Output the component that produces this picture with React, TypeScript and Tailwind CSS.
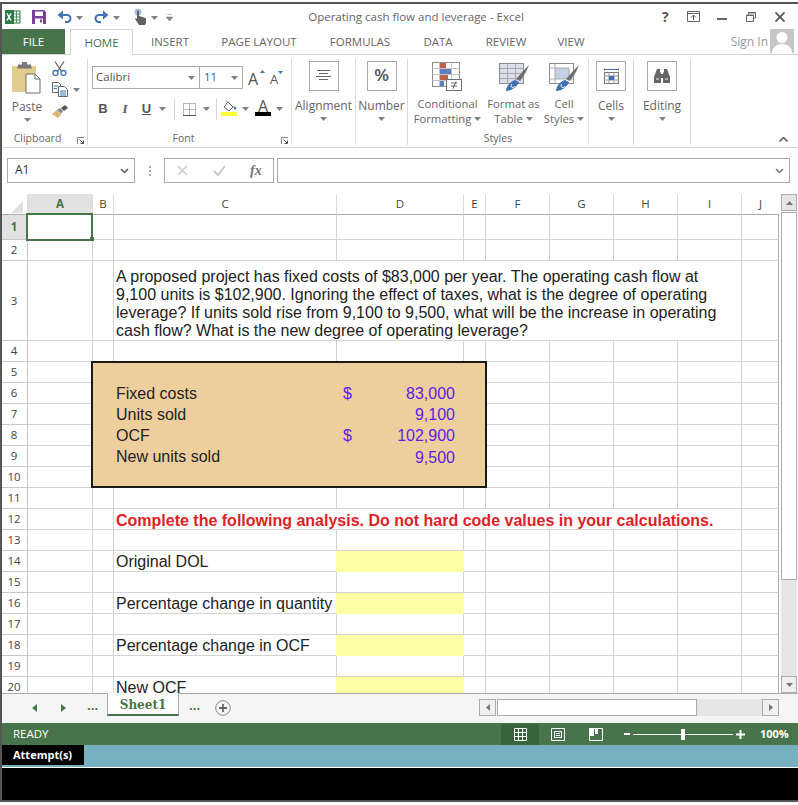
import React from "react";

const Caret = ({ c = "#808080", className = "" }: { c?: string; className?: string }) => (
  <svg width="7" height="4" viewBox="0 0 7 4" className={className}><path d="M0 0h7L3.500 4z" fill={c} /></svg>
);

const ExcelLogo = () => (
  <svg width="16" height="16" viewBox="0 0 16 16">
    <rect x="5" y="2" width="10" height="12" fill="#fff" stroke="#2f7a48" />
    <path d="M8 2v12M11.500 2v12M5 5h10M5 8h10M5 11h10" stroke="#2f7a48" strokeWidth="0.8" />
    <rect x="0" y="1" width="9" height="14" fill="#2f7a48" />
    <path d="M2 4.500l4 7M6 4.500l-4 7" stroke="#fff" strokeWidth="1.500" />
  </svg>
);
const Save = () => (
  <svg width="14" height="14" viewBox="0 0 14 14">
    <path d="M0 0h12l2 2v12H0z" fill="#7b3fa0" />
    <rect x="3" y="1.500" width="8" height="4.500" fill="#fff" />
    <rect x="3" y="8.500" width="8" height="5.500" fill="#fff" />
    <rect x="8" y="9.500" width="2" height="3" fill="#7b3fa0" />
  </svg>
);
const Undo = ({ flip = false }: { flip?: boolean }) => (
  <svg width="15" height="13" viewBox="0 0 15 13" style={flip ? { transform: "scaleX(-1)" } : undefined}>
    <path d="M2.500 5h7.500a3.500 3.500 0 0 1 0 7H8" fill="none" stroke="#3f74b5" strokeWidth="2" />
    <path d="M6 0.500v9L0.500 5z" fill="#3f74b5" />
  </svg>
);
const Touch = () => (
  <svg width="13" height="17" viewBox="0 0 13 17">
    <circle cx="4" cy="4" r="3.500" fill="#a9c0da" />
    <path d="M3 3.500a1 1 0 0 1 2 0V8l5 1.500 2 1V15l-1 2H5L1 11l1-1 1 1z" fill="#5f5f5f" />
  </svg>
);

const Paste = () => (
  <svg width="30" height="32" viewBox="0 0 30 32">
    <path d="M1 4h24v26H1z" fill="#e2cd8e" />
    <path d="M7 4V2.500h4V0h5v2.500h4V4l1 2.500H6z" fill="#7a7a7a" />
    <path d="M15 12h9l5 5v14H15z" fill="#fff" stroke="#6e6e6e" />
    <path d="M24 12v5h5" fill="none" stroke="#6e6e6e" />
  </svg>
);
const Scissors = () => (
  <svg width="15" height="15" viewBox="0 0 15 15">
    <path d="M3 0.500l6.500 10M12 0.500l-6.500 10" stroke="#666" strokeWidth="1.300" />
    <circle cx="3.500" cy="12" r="2.500" fill="none" stroke="#3f74b5" strokeWidth="1.300" />
    <circle cx="11.500" cy="12" r="2.500" fill="none" stroke="#3f74b5" strokeWidth="1.300" />
  </svg>
);
const Copy = () => (
  <svg width="16" height="15" viewBox="0 0 16 15">
    <path d="M0.500 0.500h6l2 2v8h-8z" fill="#fff" stroke="#666" />
    <path d="M6.500 4.500h6l3 3v7h-9z" fill="#fff" stroke="#666" />
    <path d="M2 4h4M2 6.500h3M8 9h6M8 11h6M8 13h6" stroke="#3f74b5" />
  </svg>
);
const Brush = () => (
  <svg width="16" height="14" viewBox="0 0 16 14">
    <path d="M0 9l5-4 4 5-3 3z" fill="#d6b873" />
    <path d="M5 5l3-2 3 3-2 3z" fill="#8a8a8a" />
    <path d="M9 3l4-3 3 3-4 3z" fill="#555" />
  </svg>
);
const Borders = () => (
  <svg width="13" height="13" viewBox="0 0 13 13">
    <path d="M0.500 0.500h12v12h-12zM6.500 0.500v12M0.500 6.500h12" fill="none" stroke="#777" strokeDasharray="1 1" />
    <path d="M0 12.500h13" stroke="#555" />
  </svg>
);
const Fill = () => (
  <svg width="16" height="16" viewBox="0 0 16 16" className="mb-[2px]">
    <path d="M3 7l4-5 5 5-4 4z" fill="#fff" stroke="#666" />
    <path d="M5 0.500l2 2" stroke="#666" />
    <path d="M12 6l3.500 1.500-1.500 3z" fill="#3f74b5" />
    <rect x="0" y="12" width="16" height="4" fill="#ffff3c" />
  </svg>
);
const ABlack = () => (
  <div className="flex flex-col items-center w-[16px] mb-[2px]">
    <span className="text-[16px] leading-[12px] text-[#555] font-['Open_Sans',sans-serif]">A</span>
    <div className="w-[16px] h-[4px] bg-black" />
  </div>
);
const AlignIcon = () => (
  <svg width="15" height="12" viewBox="0 0 15 12">
    <path d="M1 0.500h13M3 3.500h9M0 6.500h15M3 9.500h9" stroke="#666" />
  </svg>
);
const CondFmt = () => (
  <svg width="31" height="30" viewBox="0 0 31 30">
    <rect x="0.500" y="0.500" width="27" height="24" fill="#fff" stroke="#8c8c8c" />
    <path d="M7.500 0.500v24M19.500 0.500v24M0.500 6.500h27M0.500 12.500h27M0.500 18.500h27" stroke="#c4c4c4" />
    <rect x="8" y="1" width="6" height="5" fill="#b8634a" />
    <rect x="8" y="7" width="11" height="5" fill="#5b80bd" />
    <rect x="8" y="13" width="8" height="5" fill="#b8634a" />
    <rect x="8" y="19" width="4" height="5" fill="#5b80bd" />
    <rect x="14.500" y="17.500" width="15" height="11" fill="#fff" stroke="#6e6e6e" />
    <path d="M19 21h6M19 24h6M24 19.500l-3 7" stroke="#444" strokeWidth="0.800" fill="none" />
  </svg>
);
const FormatTable = ({ cell = false }: { cell?: boolean }) => (
  <svg width="30" height="30" viewBox="0 0 30 30">
    <rect x="0.500" y="1.500" width="24" height="20" fill={cell ? "#fff" : "#d9dfeb"} stroke="#8c8c8c" />
    {cell ? (
      <>
        <rect x="6" y="6" width="14" height="11" fill="#c3d0e5" />
        <path d="M6 6h14v11" fill="none" stroke="#a8a8a8" />
        <path d="M0.500 6h5.500M0.500 17h24M6 1.500v20" stroke="#aaa" />
      </>
    ) : (
      <path d="M0.500 6.500h24M0.500 11.500h24M0.500 16.500h24M8.500 1.500v20M16.500 1.500v20" stroke="#a8a8a8" />
    )}
    <path d="M17 17l8-9 5-5-3 7-6 9z" fill="#6e6e6e" />
    <path d="M7 29c0-5 5-10 9-11l4 2c-1 4-7 9-13 9z" fill="#3f6fb5" />
    <path d="M13 22a2 2 0 1 0 3 2" fill="none" stroke="#fff" />
  </svg>
);
const CellsIcon = () => (
  <svg width="15" height="17" viewBox="0 0 15 17">
    <path d="M0 1.500h15M0 0v3M15 0v3M2.500 1.500h10" stroke="#3f74b5" />
    <rect x="0.500" y="4.500" width="14" height="11" fill="#fff" stroke="#777" />
    <path d="M5 4.500v11M10 4.500v11M0.500 8h14M0.500 12h14" stroke="#999" />
    <rect x="5" y="8" width="5" height="4" fill="#3f6fb5" />
  </svg>
);
const Binoculars = () => (
  <svg width="16" height="15" viewBox="0 0 16 15">
    <path d="M3 0h3v3l1 1v10H0V8zM13 0h-3v3L9 4v10h7V8z" fill="#666" />
    <rect x="7" y="5" width="2" height="4" fill="#666" />
    <path d="M2 9h3v2H2zM11 9h3v2h-3z" fill="#aaa" />
  </svg>
);

const GroupLabel = ({ children, launcher, pr = "" }: { children: React.ReactNode; launcher?: boolean; pr?: string }) => (
  <div className={`relative h-[16px] pt-[3px] flex items-center justify-center text-[10.500px] leading-[13px] text-[#666] ${pr}`}>
    {children}
    {launcher && (
      <svg width="7" height="7" viewBox="0 0 7 7" className="absolute right-[3px] top-[8px]">
        <path d="M0.500 7V0.500H7" fill="none" stroke="#888" />
        <path d="M2.500 2.500l4 4M3.500 6.500h3v-3" fill="none" stroke="#555" />
      </svg>
    )}
  </div>
);

const BoxButton = ({ label, children, w }: { label: string; children: React.ReactNode; w: string }) => (
  <div className={`${w} h-[86px] flex flex-col items-center border-r border-[#d9d9d9] shrink-0`}>
    <div className="mt-[2px] w-[30px] h-[30px] border border-[#ababab] flex items-center justify-center">{children}</div>
    <div className="mt-[7px] text-[12px] leading-[15px] text-[#666] whitespace-nowrap">{label}</div>
    <Caret className="mt-[4px]" />
  </div>
);

const StyleBtn = ({ w, icon, l1, l2 }: { w: string; icon: React.ReactNode; l1: string; l2: string }) => (
  <div className={`${w} flex flex-col items-center text-[11.250px] leading-[15px] text-[#666] shrink-0`}>
    <div className="mt-[3px] h-[30px]">{icon}</div>
    <div className="mt-[4px] whitespace-nowrap">{l1}</div>
    <div className="whitespace-nowrap flex items-center gap-[3px]">{l2}<Caret /></div>
  </div>
);

const Tab = ({ w, t }: { w: string; t: string }) => (
  <div className={`${w} h-[25px] flex items-center justify-center text-[#666] shrink-0 whitespace-nowrap`}>{t}</div>
);

const colWidths = [26, 65, 21, 223, 127, 22, 64, 64, 64, 64, 37];
const colNames = ["", "A", "B", "C", "D", "E", "F", "G", "H", "I", "J"];
const rowHeights = [21, 25, 21, 80, ...Array(17).fill(21)];

const SheetText = ({ className, children }: { className: string; children: React.ReactNode }) => (
  <div className={`${className} relative flex items-end pl-[2px] text-[16px] leading-[20px] text-[#222] whitespace-nowrap font-['Liberation_Sans',sans-serif]`}>
    {children}
  </div>
);
const Num = ({ className, children }: { className: string; children: React.ReactNode }) => (
  <div className={`${className} relative flex items-end justify-end pr-[9px] text-[16px] leading-[20px] text-[#5a1fe0] whitespace-nowrap font-['Liberation_Sans',sans-serif]`}>
    {children}
  </div>
);
const Dollar = ({ className }: { className: string }) => (
  <div className={`${className} relative flex items-end pl-[6px] text-[16px] leading-[20px] text-[#5a1fe0] font-['Liberation_Sans',sans-serif]`}>$</div>
);

const Sheet = () => {
  const cells: React.ReactNode[] = [];
  rowHeights.forEach((_, r) => {
    colWidths.forEach((_, c) => {
      const key = `${r}-${c}`;
      const pos = { gridColumn: c + 1, gridRow: r + 1 };
      if (r === 0) {
        cells.push(
          <div
            key={key}
            style={pos}
            className={`border-b border-[#ababab] flex items-center justify-center text-[11.500px] ${c === 1 ? "bg-[#e1e1e1] text-[#47764b] font-bold" : "text-[#444]"} ${c === 10 ? "border-r-0" : "border-r border-r-[#dcdcdc]"}`}
          >
            {c === 0 ? (
              <svg width="12" height="12" viewBox="0 0 12 12" className="ml-[5px] mt-[6px]"><path d="M12 0v12H0z" fill="#e1e1e1" /></svg>
            ) : (
              colNames[c]
            )}
          </div>
        );
      } else if (c === 0) {
        cells.push(
          <div
            key={key}
            style={pos}
            className={`border-r border-b border-[#c8c8c8] flex items-center justify-center pr-[1px] text-[11.500px] ${r === 1 ? "bg-[#e1e1e1] text-[#47764b] font-bold" : "text-[#444]"}`}
          >
            {r}
          </div>
        );
      } else {
        cells.push(
          <div key={key} style={pos} className={`border-b border-[#d4d4d4] ${c === 10 ? "border-r border-r-[#ababab]" : "border-r border-r-[#d4d4d4]"}`} />
        );
      }
    });
  });

  return (
    <div className="relative flex-1 h-[499px] overflow-hidden">
      <div className="grid grid-cols-[26px_65px_21px_223px_127px_22px_64px_64px_64px_64px_37px] grid-rows-[21px_25px_21px_80px_repeat(17,21px)]">
        {cells}

        {/* merged text cell */}
        <div className="col-start-4 col-end-11 row-start-4 bg-white border-b border-r border-[#d4d4d4] relative pl-[2px] pt-[7px] text-[16px] leading-[18px] text-[#222] font-['Liberation_Sans',sans-serif] whitespace-nowrap">
          A proposed project has fixed costs of $83,000 per year. The operating cash flow at<br />
          9,100 units is $102,900. Ignoring the effect of taxes, what is the degree of operating<br />
          leverage? If units sold rise from 9,100 to 9,500, what will be the increase in operating<br />
          cash flow? What is the new degree of operating leverage?
        </div>

        {/* input box */}
        <div className="col-start-3 col-end-7 row-start-6 row-end-12 bg-[#efce9e] border-2 border-[#1a1a1a] relative mt-[-1px] ml-[-2px] mr-[-1px]" />
        <SheetText className="col-start-4 row-start-7">Fixed costs</SheetText>
        <Dollar className="col-start-5 row-start-7" />
        <Num className="col-start-5 row-start-7">83,000</Num>
        <SheetText className="col-start-4 row-start-8">Units sold</SheetText>
        <Num className="col-start-5 row-start-8">9,100</Num>
        <SheetText className="col-start-4 row-start-9">OCF</SheetText>
        <Dollar className="col-start-5 row-start-9" />
        <Num className="col-start-5 row-start-9">102,900</Num>
        <SheetText className="col-start-4 row-start-10">New units sold</SheetText>
        <Num className="col-start-5 row-start-10 pt-[1px] mb-[-1px]">9,500</Num>

        {/* merged heading */}
        <div className="col-start-4 col-end-11 row-start-13 bg-white border-b border-r border-[#d4d4d4] relative pl-[2px] pt-[4px] flex items-center text-[16px] leading-[20px] font-bold text-[#e01f26] whitespace-nowrap font-['Liberation_Sans',sans-serif]">
          Complete the following analysis. Do not hard code values in your calculations.
        </div>

        <SheetText className="col-start-4 row-start-15">Original DOL</SheetText>
        <div className="col-start-5 row-start-15 bg-[#ffffa5] relative ml-[-1px]" />
        <SheetText className="col-start-4 row-start-17">Percentage change in quantity</SheetText>
        <div className="col-start-5 row-start-17 bg-[#ffffa5] relative ml-[-1px]" />
        <SheetText className="col-start-4 row-start-19">Percentage change in OCF</SheetText>
        <div className="col-start-5 row-start-19 bg-[#ffffa5] relative ml-[-1px]" />
        <SheetText className="col-start-4 row-start-21">New OCF</SheetText>
        <div className="col-start-5 row-start-21 bg-[#ffffa5] relative ml-[-1px]" />
      </div>
      {/* active cell */}
      <div className="absolute left-[24px] top-[19px] w-[67px] h-[28px] border-2 border-[#47764b]">
        <div className="absolute right-[-3px] bottom-[-2px] w-[4px] h-[4px] bg-[#47764b]" />
      </div>
    </div>
  );
};

export default function App() {
  return (
    <div className="mt-[2px] w-[798px] h-[800px] border-t-2 border-l-2 border-b-2 border-[#555] bg-white overflow-hidden flex flex-col font-['Open_Sans',sans-serif]">
      {/* Title bar */}
      <div className="h-[25px] flex items-center shrink-0">
        <div className="w-[173px] flex items-center pl-[3px] shrink-0">
          <ExcelLogo />
          <div className="ml-[11px]"><Save /></div>
          <div className="ml-[11px]"><Undo /></div>
          <Caret className="ml-[4px] mt-[2px]" />
          <div className="ml-[11px]"><Undo flip /></div>
          <Caret className="ml-[4px] mt-[2px]" />
          <div className="ml-[14px]"><Touch /></div>
          <Caret className="ml-[4px] mt-[2px]" />
          <svg width="7" height="7" viewBox="0 0 7 7" className="ml-[8px] mt-[2px]"><path d="M1 0.500h5M0 3h7L3.500 7z" fill="#808080" stroke="#808080" strokeWidth="0.500" /></svg>
        </div>
        <div className="flex-1 text-center text-[11.500px] text-[#666] whitespace-nowrap">Operating cash flow and leverage - Excel</div>
        <div className="w-[141px] flex items-center shrink-0 text-[#555]">
          <span className="ml-[5px] w-[8px] text-[14px] font-bold leading-[14px]">?</span>
          <svg width="13" height="11" viewBox="0 0 13 11" className="ml-[17px]">
            <path d="M0.500 0.500h12v10h-12zM0.500 2.500h12" fill="none" stroke="#666" />
            <path d="M6.500 9V4.500M4 6.500l2.500-2.500 2.500 2.500" fill="none" stroke="#555" />
          </svg>
          <div className="ml-[17px] w-[10px] h-[2px] bg-[#666] mt-[5px]" />
          <svg width="10" height="10" viewBox="0 0 10 10" className="ml-[19px]">
            <path d="M2.500 2.500V0.500h7v5.500h-2.500" fill="none" stroke="#666" />
            <path d="M0.500 3h7v6.500h-7z" fill="none" stroke="#666" />
            <path d="M0.500 3.500h7M2.500 1h7" stroke="#666" />
          </svg>
          <svg width="10" height="10" viewBox="0 0 10 10" className="ml-[19px]">
            <path d="M0.500 0.500l9 9M9.500 0.500l-9 9" stroke="#555" strokeWidth="1.800" />
          </svg>
        </div>
      </div>

      {/* Tabs */}
      <div className="h-[26px] flex border-b border-[#d4d4d4] text-[11.500px] shrink-0">
        <div className="w-[63px] h-[25px] bg-[#47744a] text-white flex items-center justify-center shrink-0">FILE</div>
        <div className="ml-[5px] w-[63px] h-[26px] bg-white border border-b-0 border-[#d4d4d4] text-[#47744a] flex items-center justify-center shrink-0">HOME</div>
        <Tab w="w-[74px]" t="INSERT" />
        <Tab w="w-[104px]" t="PAGE LAYOUT" />
        <Tab w="w-[98px]" t="FORMULAS" />
        <Tab w="w-[58px]" t="DATA" />
        <Tab w="w-[78px]" t="REVIEW" />
        <Tab w="w-[52px]" t="VIEW" />
        <div className="flex-1 flex justify-end items-start pr-[4px]">
          <span className="text-[#999] mt-[4px] mr-[2px] text-[12px]">Sign In</span>
          <svg width="24" height="24" viewBox="0 0 24 24" className="shrink-0">
            <rect width="24" height="24" fill="#c6c6c6" />
            <circle cx="12" cy="8.500" r="5.500" fill="#fff" />
            <path d="M2 24c0-6 5-9 10-9s10 3 10 9z" fill="#fff" />
          </svg>
        </div>
      </div>

      {/* Ribbon */}
      <div className="h-[93px] pt-[4px] flex border-b border-[#d4d4d4] shrink-0 relative">
        {/* Clipboard */}
        <div className="w-[86px] h-[86px] flex flex-col border-r border-[#d9d9d9] shrink-0">
          <div className="flex-1 flex">
            <div className="w-[50px] flex flex-col items-center">
              <div className="mt-[3px] ml-[-2px]"><Paste /></div>
              <div className="mt-[5px] text-[12px] leading-[15px] text-[#666]">Paste</div>
              <Caret className="mt-[4px]" />
            </div>
            <div className="flex flex-col items-start">
              <div className="mt-[2px]"><Scissors /></div>
              <div className="mt-[6px] flex items-center gap-[5px]"><Copy /><Caret /></div>
              <div className="mt-[8px]"><Brush /></div>
            </div>
          </div>
          <GroupLabel launcher pr="pr-[14px]">Clipboard</GroupLabel>
        </div>
        {/* Font */}
        <div className="w-[204px] h-[86px] flex flex-col border-r border-[#d9d9d9] shrink-0">
          <div className="flex-1">
            <div className="mt-[7px] ml-[4px] flex items-center">
              <div className="w-[108px] h-[23px] border border-[#ababab] flex items-center justify-between pl-[3px] pr-[4px] text-[11.500px] text-[#555]"><span className="mt-[-2px]">Calibri</span><Caret /></div>
              <div className="w-[43px] h-[23px] border border-l-0 border-[#ababab] flex items-center justify-between pl-[4px] pr-[4px] text-[11.500px] text-[#555]"><span className="mt-[-2px]">11</span><Caret /></div>
              <div className="ml-[5px] w-[12px] relative text-[16px] leading-[18px] text-[#555] mt-[2px]">A<svg width="5" height="3" viewBox="0 0 5 3" className="absolute right-[-5px] top-[0px]"><path d="M0 3h5L2.500 0z" fill="#3f74b5" /></svg></div>
              <div className="ml-[10px] w-[9px] relative text-[13px] leading-[16px] text-[#555] mt-[3px]">A<svg width="5" height="3" viewBox="0 0 5 3" className="absolute right-[-4px] top-[0px]"><path d="M0 0h5L2.500 3z" fill="#3f74b5" /></svg></div>
            </div>
            <div className="mt-[9px] flex items-center h-[22px] text-[13px] text-[#555]">
              <span className="ml-[10px] w-[10px] text-center font-bold font-['Liberation_Sans',sans-serif]">B</span>
              <span className="ml-[13px] w-[8px] text-center italic font-['Liberation_Serif',serif] font-bold">I</span>
              <span className="ml-[12px] w-[11px] text-center font-bold underline font-['Liberation_Sans',sans-serif]">U</span>
              <Caret className="ml-[7px]" />
              <div className="ml-[8px] w-px h-[22px] bg-[#d9d9d9]" />
              <div className="ml-[8px]"><Borders /></div>
              <Caret className="ml-[7px]" />
              <div className="ml-[6px] w-px h-[22px] bg-[#d9d9d9]" />
              <div className="ml-[4px]"><Fill /></div>
              <Caret className="ml-[5px]" />
              <div className="ml-[6px]"><ABlack /></div>
              <Caret className="ml-[5px]" />
            </div>
          </div>
          <GroupLabel launcher pr="pr-[12px]">Font</GroupLabel>
        </div>
        <BoxButton label="Alignment" w="w-[64px]"><AlignIcon /></BoxButton>
        <BoxButton label="Number" w="w-[52px]"><span className="text-[16px] font-bold text-[#555] font-['Liberation_Sans',sans-serif]">%</span></BoxButton>
        {/* Styles */}
        <div className="w-[181px] h-[86px] flex flex-col border-r border-[#d9d9d9] shrink-0">
          <div className="flex-1 flex">
            <StyleBtn w="w-[79px]" icon={<CondFmt />} l1="Conditional" l2="Formatting" />
            <StyleBtn w="w-[53px]" icon={<FormatTable />} l1="Format as" l2="Table" />
            <StyleBtn w="w-[48px]" icon={<FormatTable cell />} l1="Cell" l2="Styles" />
          </div>
          <GroupLabel>Styles</GroupLabel>
        </div>
        <BoxButton label="Cells" w="w-[45px]"><CellsIcon /></BoxButton>
        <BoxButton label="Editing" w="w-[57px]"><Binoculars /></BoxButton>
        <svg width="9" height="5" viewBox="0 0 9 5" className="absolute left-[777px] top-[82px]">
          <path d="M0.500 4.500l4-4 4 4" fill="none" stroke="#555" strokeWidth="1.500" />
        </svg>
      </div>

      {/* Formula bar */}
      <div className="h-[46px] flex items-start pt-[10px] shrink-0">
        <div className="ml-[5px] w-[128px] h-[25px] border border-[#ababab] flex items-center justify-between pl-[7px] pr-[5px] text-[12px] text-[#333]">
          <span className="mt-[-2px]">A1</span>
          <svg width="9" height="6" viewBox="0 0 9 6"><path d="M1 1l3.500 3.500L8 1" fill="none" stroke="#555" strokeWidth="1.500" /></svg>
        </div>
        <div className="w-[29px] h-[25px] flex flex-col items-center justify-center gap-[2px]">
          <div className="w-[2px] h-[2px] bg-[#aaa]" />
          <div className="w-[2px] h-[2px] bg-[#aaa]" />
          <div className="w-[2px] h-[2px] bg-[#aaa]" />
        </div>
        <div className="w-[110px] h-[25px] border border-[#ababab] flex items-center text-[#aaa]">
          <svg width="11" height="11" viewBox="0 0 11 11" className="ml-[12px]"><path d="M1 1l9 9M10 1l-9 9" stroke="#c8c8c8" strokeWidth="1.500" /></svg>
          <svg width="13" height="11" viewBox="0 0 13 11" className="ml-[25px]"><path d="M1 6l4 4 7-9" fill="none" stroke="#c8c8c8" strokeWidth="2" /></svg>
          <span className="ml-[24px] text-[14px] italic font-bold text-[#777] font-['Liberation_Serif',serif]">fx</span>
        </div>
        <div className="ml-[3px] w-[513px] h-[25px] border border-[#ababab] flex items-center justify-end pr-[5px]">
          <svg width="9" height="6" viewBox="0 0 9 6"><path d="M1 1l3.500 3.500L8 1" fill="none" stroke="#777" strokeWidth="1.500" /></svg>
        </div>
      </div>

      {/* Sheet + vertical scrollbar */}
      <div className="h-[500px] flex shrink-0 border-b border-[#ababab]">
        <Sheet />
        <div className="w-[19px] h-[499px] pl-[2px] flex flex-col shrink-0">
          <div className="w-[16px] h-[17px] bg-[#e6e6e6] border border-[#ababab] flex items-center justify-center">
            <svg width="7" height="4" viewBox="0 0 7 4"><path d="M0 4h7L3.500 0z" fill="#777" /></svg>
          </div>
          <div className="flex-1 mt-[1px] w-[16px] bg-[#e6e6e6]">
            <div className="h-[368px] bg-white border border-[#ababab]" />
          </div>
          <div className="w-[16px] h-[17px] bg-[#f0f0f0] border border-[#ababab] flex items-center justify-center">
            <Caret c="#777" />
          </div>
        </div>
      </div>

      {/* Sheet tabs */}
      <div className="h-[29px] bg-[#f5f5f5] flex items-start shrink-0">
        <svg width="5" height="8" viewBox="0 0 5 8" className="ml-[30px] mt-[10px]"><path d="M5 0v8L0 4z" fill="#47764b" /></svg>
        <svg width="5" height="8" viewBox="0 0 5 8" className="ml-[24px] mt-[10px]"><path d="M0 0v8l5-4z" fill="#47764b" /></svg>
        <span className="ml-[21px] mt-[3px] w-[12px] text-[13px] leading-[16px] font-bold text-[#47764b]">...</span>
        <div className="ml-[8px] w-[72px] h-[23px] mt-[-1px] pt-[2px] bg-white border-x border-[#ababab] border-b-2 border-b-[#47764b] flex items-center justify-center text-[12px] font-bold text-[#47764b] font-['DejaVu_Serif',serif]">
          Sheet1
        </div>
        <span className="ml-[10px] mt-[3px] w-[12px] text-[13px] leading-[16px] font-bold text-[#47764b]">...</span>
        <svg width="16" height="16" viewBox="0 0 16 16" className="ml-[14px] mt-[6px]">
          <circle cx="8" cy="8" r="7.300" fill="none" stroke="#8a8a8a" strokeWidth="1" />
          <path d="M4 8h8M8 4v8" stroke="#666" strokeWidth="1.800" />
        </svg>
        <div className="ml-[248px] mt-[5px] flex h-[17px] w-[300px]">
          <div className="w-[17px] h-[17px] border border-[#ababab] bg-[#f0f0f0] flex items-center justify-center">
            <svg width="4" height="7" viewBox="0 0 4 7"><path d="M4 0v7L0 3.500z" fill="#777" /></svg>
          </div>
          <div className="ml-[1px] w-[200px] h-[17px] bg-white border border-[#ababab]" />
          <div className="flex-1 bg-[#e6e6e6]" />
          <div className="w-[17px] h-[17px] border border-[#ababab] bg-[#f0f0f0] flex items-center justify-center">
            <svg width="4" height="7" viewBox="0 0 4 7"><path d="M0 0v7l4-3.500z" fill="#777" /></svg>
          </div>
        </div>
      </div>

      {/* Status bar */}
      <div className="h-[22px] bg-[#47744a] flex items-center text-white shrink-0">
        <span className="ml-[11px] text-[11.500px]">READY</span>
        <div className="ml-auto flex items-center">
          <div className="w-[38px] h-[21px] bg-[#38643b] flex items-center justify-center">
            <svg width="13" height="13" viewBox="0 0 13 13"><path d="M0.500 0.500h12v12h-12zM4.500 0.500v12M8.500 0.500v12M0.500 4.500h12M0.500 8.500h12" fill="none" stroke="#fff" /></svg>
          </div>
          <svg width="14" height="13" viewBox="0 0 14 13" className="ml-[12px]"><path d="M0.500 0.500h13v12h-13z" fill="none" stroke="#fff" /><path d="M3.500 3.500h7v6h-7zM5 5.500h4M5 7.500h4" fill="none" stroke="#fff" /></svg>
          <svg width="14" height="13" viewBox="0 0 14 13" className="ml-[24px]"><path d="M0.500 0.500h13v12h-13z" fill="none" stroke="#fff" /><path d="M0 0h5v8H0zM6 0h3v6H6z" fill="#fff" /></svg>
          <div className="ml-[21px] w-[6px] h-[2px] bg-white" />
          <div className="w-[100px] h-[1px] bg-white relative ml-[3px]">
            <div className="absolute left-[48px] top-[-5px] w-[4px] h-[11px] bg-white" />
          </div>
          <svg width="9" height="9" viewBox="0 0 9 9" className="ml-[3px]"><path d="M0 4.500h9M4.500 0v9" stroke="#fff" strokeWidth="2" /></svg>
          <span className="ml-[15px] w-[38px] text-[11px] font-bold whitespace-nowrap">100%</span>
        </div>
      </div>

      {/* Attempts */}
      <div className="h-[23px] bg-[#78b0c0] shrink-0 border-b border-white">
        <div className="w-[82px] h-[20px] bg-black text-white text-[11px] font-bold flex items-center pl-[11px]">Attempt(s)</div>
      </div>
      <div className="flex-1 bg-black" />
    </div>
  );
}
